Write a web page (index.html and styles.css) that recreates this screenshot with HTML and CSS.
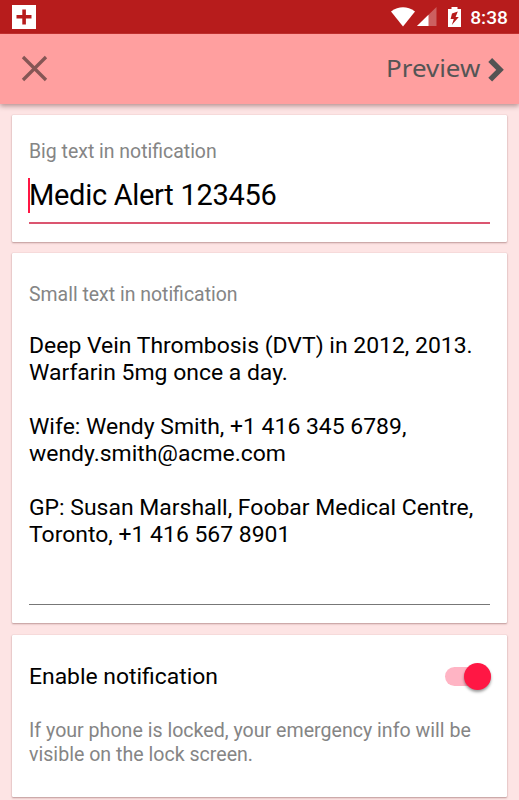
FILE: index.html
```html
<!DOCTYPE html>
<html lang="en">
<head>
<meta charset="utf-8">
<title>Emergency info</title>
<link rel="stylesheet" href="styles.css">
</head>
<body>
<div class="status">
  <svg class="status-cross" width="24" height="24" viewBox="0 0 24 24"><path fill="#fff" d="M0 0h24v24H0z"/><path fill="#b71c1c" d="M10.300 4.500h3.600v5.500h5.600v3.600H13.900V19.500h-3.600v-5.900H4.500V10h5.800z"/></svg>
  <div class="status-icons">
    <svg width="24" height="20" viewBox="0 0 24 20"><path fill="#fff" d="M0 4.500Q12-3.800 24 4.500L12 19.500z"/></svg>
    <svg class="signal" width="20" height="20" viewBox="0 0 20 20"><path fill="#fff" opacity=".3" d="M19.500 0v19H0z"/><path fill="#fff" d="M11.500 7.800V19H0z"/></svg>
    <svg class="battery" width="13" height="20" viewBox="0 0 13 20"><path fill="#fff" d="M3.500 0h6v2H13v18H0V2h3.500z"/><path fill="#b71c1c" d="M9.800 4.500L4 6.500 2.600 12h3.200l-2 6 7-8H7.600z"/></svg>
    <span class="clock">8:38</span>
  </div>
</div>
<header class="appbar">
  <svg class="close" width="27" height="27" viewBox="0 0 27 27"><path d="M2 2l23 23M25 2L2 25" stroke="#855655" stroke-width="3.300" fill="none"/></svg>
  <div class="preview"><span class="preview-text">Preview</span>
    <svg width="16" height="24" viewBox="0 0 16 24"><path d="M2.200 2l9.800 9.800L2.200 21.600" fill="none" stroke="#535353" stroke-width="5.400"/></svg>
  </div>
</header>
<main class="cards">
  <section class="card card-big">
    <div class="label">Big text in notification</div>
    <div class="field-big"><span class="big-text">Medic Alert 123456</span></div>
  </section>
  <section class="card card-small">
    <div class="label">Small text in notification</div>
    <div class="field-small"><span>Deep Vein Thrombosis (DVT) in 2012, 2013.
Warfarin 5mg once a day.

Wife: Wendy Smith, +1 416 345 6789,
wendy.smith@acme.com

GP: Susan Marshall, Foobar Medical Centre,
Toronto, +1 416 567 8901</span></div>
  </section>
  <section class="card card-enable">
    <div class="enable-row"><span class="enable-text">Enable notification</span><div class="switch"><div class="knob"></div></div></div>
    <div class="hint">If your phone is locked, your emergency info will be<br>visible on the lock screen.</div>
  </section>
</main>
</body>
</html>
```
FILE: styles.css
```css
* { box-sizing: border-box; }
body {
  margin: 0;
  height: 800px;
  overflow: hidden;
  background: #fde4e4;
  font-family: Roboto, "Liberation Sans", sans-serif;
  color: #000;
}
svg { display: block; flex: none; }
.status {
  height: 34px;
  background: #b71c1c;
  border-bottom: 1px solid #c9302f;
  display: flex;
  justify-content: space-between;
  align-items: flex-start;
  padding: 5px 11px 0 12px;
}
.status-icons { display: flex; padding-top: 2px; }
.signal { margin-left: 2px; }
.battery { margin-left: 11px; }
.clock {
  margin-left: 9px;
  font-size: 19.200px;
  font-weight: 500;
  line-height: 22px;
  color: #fff;
}
.appbar {
  height: 70px;
  background: #ff9f9f;
  box-shadow: 0 2px 5px rgba(70, 20, 20, .4);
  display: flex;
  align-items: center;
  justify-content: space-between;
  padding: 0 15px 2px 21px;
  position: relative;
}
.preview { display: flex; align-items: center; }
.preview-text {
  font-family: "Noto Sans", "Open Sans", sans-serif;
  font-size: 24px;
  line-height: 34px;
  color: #555;
  margin-right: 8px;
  transform: scaleX(1.08);
  transform-origin: right center;
}
.preview svg { margin-top: 4px; }
.cards {
  display: flex;
  flex-direction: column;
  gap: 12px;
  padding: 11px 12px 0;
}
.card {
  flex: none;
  background: #fff;
  border-radius: 1px;
  box-shadow: 0 1px 2px rgba(80, 20, 20, .35), 0 0 1px rgba(80, 20, 20, .25);
  padding: 0 17px;
  white-space: nowrap;
}
.card-big { height: 127px; padding-top: 25px; }
.card-small { height: 370px; padding-top: 30px; margin-top: -1px; }
.card-enable { height: 162px; }
.label { font-size: 19.450px; line-height: 24px; color: #858585; }
.field-big {
  margin-top: 14px;
  height: 46px;
  border-bottom: 2px solid #db5570;
}
.big-text {
  display: block;
  height: 35px;
  line-height: 34px;
  font-size: 29px;
  letter-spacing: -.3px;
  border-left: 2px solid #ff1744;
  margin-left: -1px;
  text-indent: -1px;
}
.field-small {
  margin-top: 25px;
  height: 273px;
  font-size: 22.950px;
  line-height: 27px;
  white-space: pre;
  border-bottom: 1px solid #777;
}
.enable-row {
  display: flex;
  justify-content: space-between;
  align-items: center;
  padding-top: 27px;
}
.enable-text { font-size: 22.900px; line-height: 28px; padding-top: 1px; }
.switch {
  width: 46px;
  height: 19px;
  border-radius: 10px;
  background: #ffb4c4;
  display: flex;
  justify-content: flex-end;
  align-items: center;
  margin: -1px -1px 0 0;
}
.knob {
  width: 27px;
  height: 27px;
  flex: none;
  border-radius: 50%;
  background: #ff1744;
  box-shadow: 0 2px 3px rgba(0, 0, 0, .4);
}
.hint { margin-top: 28px; font-size: 19.600px; line-height: 24px; color: #858585; }
```
